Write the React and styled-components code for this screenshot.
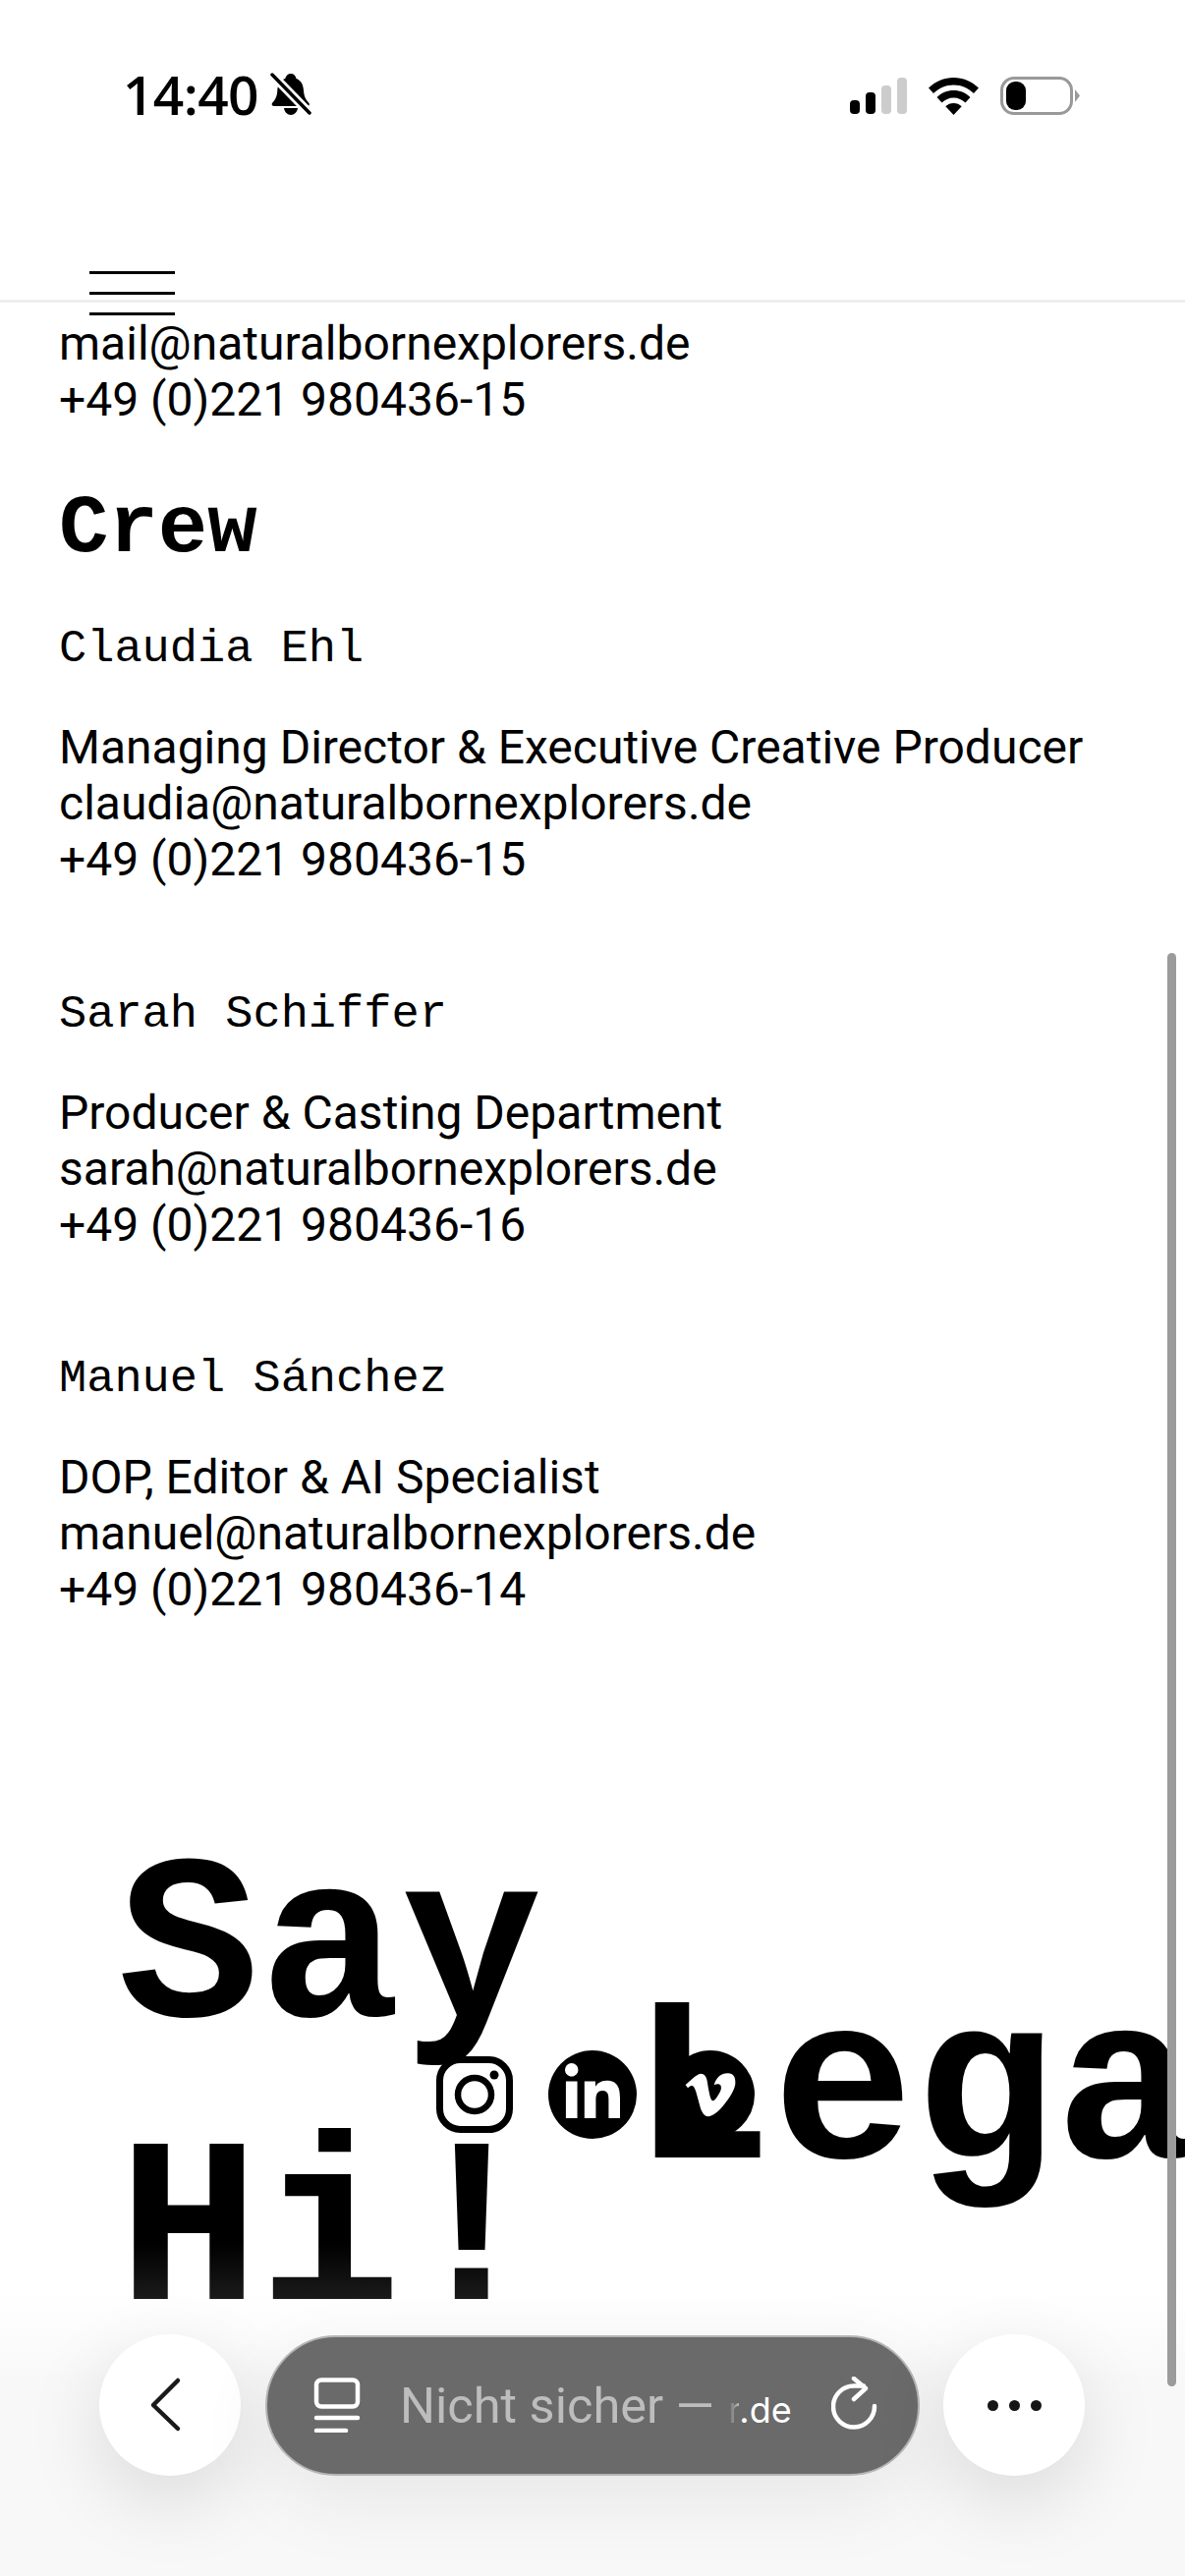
import React from "react";
import styled, { createGlobalStyle } from "styled-components";
import { FaLinkedinIn, FaVimeoV } from "react-icons/fa";

const Global = createGlobalStyle`
  html, body { margin: 0; padding: 0; background: #fff; }
  body { font-family: Roboto, "Liberation Sans", sans-serif; color: #000; }
`;

const Page = styled.div`
  position: relative;
  width: 1206px;
  height: 2622px;
  overflow: hidden;
  background: #fff;
`;

const Header = styled.header`
  position: relative;
  height: 305px;
  border-bottom: 3px solid #eeeeee;
  display: flex;
  flex-direction: column;
`;

const StatusBar = styled.div`
  display: flex;
  justify-content: space-between;
  align-items: flex-start;
  padding: 67px 114px 0 125px;
`;

const Time = styled.div`
  display: flex;
  align-items: center;
  gap: 12px;
  font-family: "Open Sans", sans-serif;
  font-weight: 600;
  font-size: 55px;
  line-height: 58px;
  letter-spacing: -0.6px;
`;

const StatusIcons = styled.div`
  display: flex;
  align-items: center;
  gap: 22px;
  padding-top: 11px;
`;

const Signal = styled.div`
  display: flex;
  align-items: flex-end;
  gap: 6px;
  height: 37px;
`;

const Bar = styled.span`
  display: block;
  width: 10px;
  height: ${(p) => p.$h}px;
  border-radius: 4px;
  background: ${(p) => (p.$on ? "#000" : "#cccccc")};
`;

const Battery = styled.div`
  position: relative;
  box-sizing: border-box;
  width: 74px;
  height: 39px;
  border: 3px solid #999;
  border-radius: 14px;
  padding: 2px 3px;
  &::after {
    content: "";
    position: absolute;
    right: -10px;
    top: 10px;
    width: 5px;
    height: 13px;
    background: #999;
    clip-path: polygon(0 0, 100% 50%, 0 100%);
  }
`;

const BatteryLevel = styled.div`
  width: 20px;
  height: 100%;
  border-radius: 9px;
  background: #000;
`;

const Hamburger = styled.div`
  position: absolute;
  left: 91px;
  top: 276px;
  width: 87px;
  height: 45px;
  display: flex;
  flex-direction: column;
  justify-content: space-between;
`;

const HamburgerLine = styled.span`
  display: block;
  height: 3px;
  background: #000;
`;

const Main = styled.main`
  padding: 13px 60px 0;
`;

const Text = styled.p`
  margin: 0;
  font-size: 48px;
  line-height: 57px;
  letter-spacing: 0;
  white-space: nowrap;
`;

const Heading = styled.h2`
  margin: 56px 0 48px;
  font-family: "Liberation Mono", monospace;
  font-weight: 700;
  font-size: 84px;
  line-height: normal;
`;

const Person = styled.section`
  margin-bottom: 102.5px;
`;

const Name = styled.h3`
  margin: 0 0 45px;
  font-family: "Liberation Mono", monospace;
  font-weight: 400;
  font-size: 47px;
  line-height: normal;
`;

const Footer = styled.footer`
  display: flex;
  align-items: center;
  height: 576px;
  margin-top: 198px;
  padding-left: 120px;
  font-family: "Liberation Mono", monospace;
  font-weight: 700;
  font-size: 240px;
  line-height: 288px;
  white-space: nowrap;
`;

const SayHi = styled.div`
  flex: 0 0 318px;
  min-width: 0;
`;

const Socials = styled.div`
  flex: 0 0 330px;
  display: flex;
  align-items: center;
  gap: 30px;
  margin-right: -126px;
  position: relative;
  z-index: 1;
`;

const Round = styled.div`
  width: 90px;
  height: 90px;
  border-radius: 50%;
  background: #000;
  color: #fff;
  display: flex;
  align-items: center;
  justify-content: center;
`;

const Square = styled.div`
  width: 90px;
  height: 90px;
  display: flex;
  align-items: center;
  justify-content: center;
`;

const Legal = styled.div``;

const Fade = styled.div`
  position: absolute;
  left: 0;
  right: 0;
  bottom: 0;
  height: 340px;
  background: linear-gradient(to bottom, rgba(248,248,248,0) 0%, rgba(248,248,248,.11) 17.6%, rgba(248,248,248,1) 42%, #f8f8f8 100%);
  pointer-events: none;
`;

const Scrollbar = styled.div`
  position: absolute;
  right: 9px;
  top: 970px;
  width: 9px;
  height: 1459px;
  border-radius: 5px;
  background: #9b9b9b;
`;

const BottomBar = styled.div`
  position: absolute;
  left: 101px;
  top: 2376px;
  width: 1003px;
  display: flex;
  align-items: center;
  justify-content: space-between;
`;

const CircleButton = styled.div`
  width: 144px;
  height: 144px;
  border-radius: 50%;
  background: #fff;
  box-shadow: 0 26px 80px rgba(0,0,0,.12);
  display: flex;
  align-items: center;
  justify-content: center;
`;

const Dots = styled.div`
  display: flex;
  gap: 11px;
`;

const Dot = styled.span`
  display: block;
  width: 11px;
  height: 11px;
  border-radius: 50%;
  background: #151515;
`;

const Pill = styled.div`
  box-sizing: border-box;
  width: 666px;
  height: 143px;
  margin-left: 1px;
  border-radius: 72px;
  background: #6a6a6a;
  border: 2px solid #b5b5b5;
  box-shadow: 0 26px 80px rgba(0,0,0,.07);
  display: flex;
  align-items: center;
  padding: 0 40px 0 47px;
`;

const Address = styled.div`
  flex: 1;
  display: flex;
  align-items: baseline;
  margin-left: 40px;
  white-space: nowrap;
`;

const NotSecure = styled.span`
  font-size: 50.5px;
  color: #bdbdbd;
`;

const Domain = styled.span`
  margin-left: 14px;
  font-family: Inter, sans-serif;
  font-size: 36px;
  color: #fff;
`;

const FadedR = styled.span`
  background: linear-gradient(to right, #6a6a6a 0%, #bbb 100%);
  -webkit-background-clip: text;
  background-clip: text;
  color: transparent;
`;

export default function App() {
  return (
    <Page>
      <Global />
      <Header>
        <StatusBar>
          <Time>
            14:40
            <svg width="42" height="44" viewBox="0 0 42 44">
              <path d="M21 1c3 0 5 2 5.500 5 5 2 7 6 7.500 12 .3 6 2 9 5.500 13 1 1.500 0 3-2 3H4c-2 0-3-1.500-2-3 3.500-4 5-7 5.300-13 .4-6 2.700-10 8-12C15.800 3 18 1 21 1z" fill="#000" />
              <path d="M14 36h14c-.5 4-3.500 7-7 7s-6.500-3-7-7z" fill="#000" />
              <path d="M2 2l38 39" stroke="#fff" strokeWidth="9" />
              <path d="M2 2l38 39" stroke="#000" strokeWidth="3.500" strokeLinecap="round" />
            </svg>
          </Time>
          <StatusIcons>
            <Signal>
              <Bar $on $h={14} />
              <Bar $on $h={22} />
              <Bar $h={29} />
              <Bar $h={37} />
            </Signal>
            <svg width="51" height="38" viewBox="0 0 51 38">
              <path d="M25.500 0C35 0 44 4 51 10.500l-5 5.500C40.500 10.800 33.500 7.500 25.500 7.500S10.500 10.800 5 16L0 10.500C7 4 16 0 25.500 0z" fill="#000" />
              <path d="M25.500 13c6.500 0 12.500 2.600 17 7l-5 5.500c-3.200-3-7.400-5-12-5s-8.800 2-12 5l-5-5.500c4.500-4.400 10.500-7 17-7z" fill="#000" />
              <path d="M25.500 26c3.200 0 6 1.200 8.200 3.300L25.500 38l-8.200-8.700C19.500 27.200 22.300 26 25.500 26z" fill="#000" />
            </svg>
            <Battery>
              <BatteryLevel />
            </Battery>
          </StatusIcons>
        </StatusBar>
        <Hamburger>
          <HamburgerLine />
          <HamburgerLine />
          <HamburgerLine />
        </Hamburger>
      </Header>
      <Main>
        <Text>mail@naturalbornexplorers.de</Text>
        <Text>+49 (0)221 980436-15</Text>
        <Heading>Crew</Heading>
        <Person>
          <Name>Claudia Ehl</Name>
          <Text>Managing Director &amp; Executive Creative Producer</Text>
          <Text>claudia@naturalbornexplorers.de</Text>
          <Text>+49 (0)221 980436-15</Text>
        </Person>
        <Person>
          <Name>Sarah Schiffer</Name>
          <Text>Producer &amp; Casting Department</Text>
          <Text>sarah@naturalbornexplorers.de</Text>
          <Text>+49 (0)221 980436-16</Text>
        </Person>
        <Person>
          <Name>Manuel Sánchez</Name>
          <Text>DOP, Editor &amp; AI Specialist</Text>
          <Text>manuel@naturalbornexplorers.de</Text>
          <Text>+49 (0)221 980436-14</Text>
        </Person>
      </Main>
      <Footer>
        <SayHi>
          Say
          <br />
          Hi!
        </SayHi>
        <Socials>
          <Square>
            <svg width="78" height="78" viewBox="0 0 78 78" fill="none" stroke="#000">
              <rect x="3.500" y="3.500" width="71" height="71" rx="21" strokeWidth="7" fill="#fff" />
              <circle cx="39" cy="39" r="17" strokeWidth="6.500" />
              <circle cx="59" cy="19" r="4.500" fill="#000" stroke="none" />
            </svg>
          </Square>
          <Round>
            <FaLinkedinIn size={64} />
          </Round>
          <Round>
            <FaVimeoV size={58} />
          </Round>
        </Socials>
        <Legal>Legal</Legal>
      </Footer>
      <Fade />
      <Scrollbar />
      <BottomBar>
        <CircleButton>
          <svg width="144" height="144" viewBox="0 0 144 144" fill="none">
            <path d="M80 47 55 72l25 24" stroke="#1a1a1a" strokeWidth="4.500" strokeLinecap="round" strokeLinejoin="round" />
          </svg>
        </CircleButton>
        <Pill>
          <svg width="48" height="56" viewBox="0 0 48 56" fill="none" stroke="#fff" strokeWidth="4.500" strokeLinecap="round">
            <rect x="3" y="2.500" width="42" height="27" rx="5" />
            <path d="M3 41h42M3 54h30" />
          </svg>
          <Address>
            <NotSecure>Nicht sicher —</NotSecure>
            <Domain>
              <FadedR>r</FadedR>.de
            </Domain>
          </Address>
          <svg width="48" height="58" viewBox="0 0 48 58" fill="none" stroke="#fff" strokeWidth="4.500" strokeLinecap="round" strokeLinejoin="round">
            <path d="M44 30a21 21 0 1 1-21-20.500h10" />
            <path d="M23 2l12 10-12 11" />
          </svg>
        </Pill>
        <CircleButton>
          <Dots>
            <Dot />
            <Dot />
            <Dot />
          </Dots>
        </CircleButton>
      </BottomBar>
    </Page>
  );
}
